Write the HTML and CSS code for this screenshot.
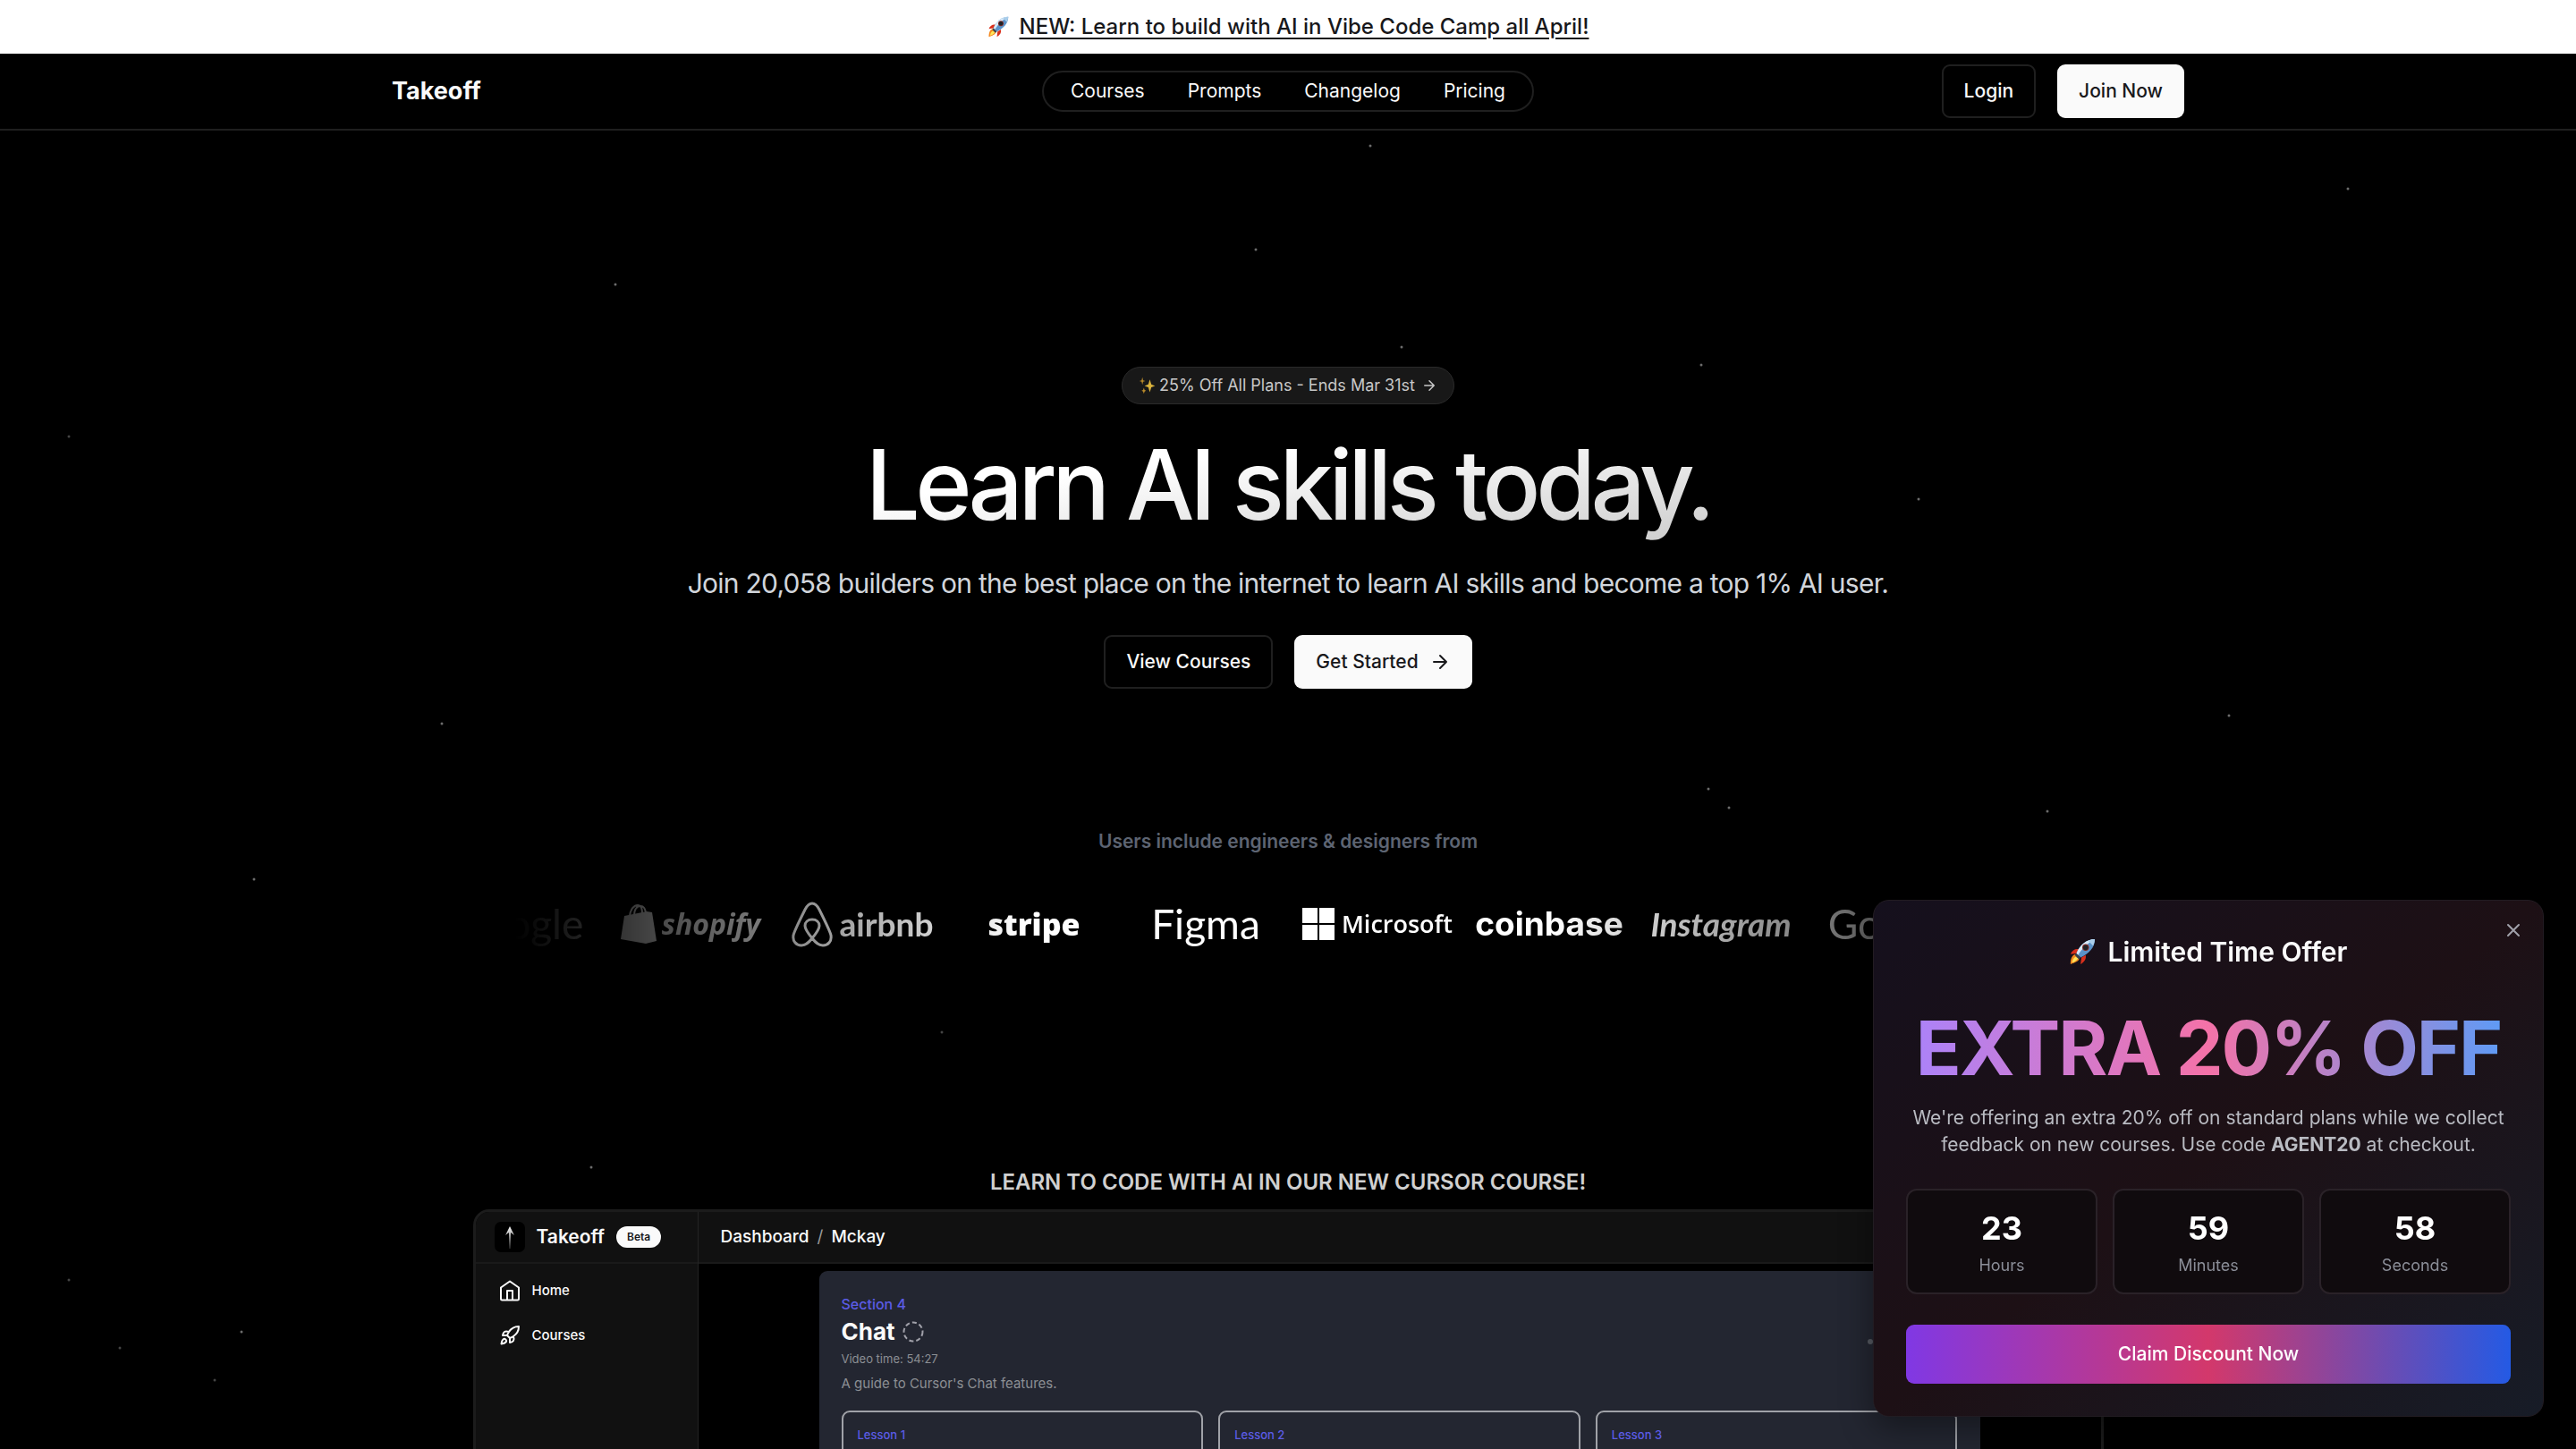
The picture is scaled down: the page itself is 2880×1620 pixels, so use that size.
FILE: index.html
```html
<!DOCTYPE html>
<html lang="en">
<head>
<meta charset="utf-8">
<title>Takeoff</title>
<link rel="stylesheet" href="styles.css">
</head>
<body>
<svg class="defs" aria-hidden="true">
  <defs>
    <symbol id="rocket-emoji" viewBox="0 0 32 32">
      <path d="M12 13c-4-1-8 1-10 6l7-1z" fill="#d9301c"/>
      <path d="M20 20c1 4-1 8-6 11l1-8z" fill="#d9301c"/>
      <path d="M8 19c-4 1-6 5-6 12 5-2 10-3 11-8z" fill="#f58a1f"/>
      <path d="M8 22c-2 1-4 4-4 7 3-1 5-2 7-5z" fill="#ffe75a"/>
      <path d="M31 1C21 1 13 8 9 18l5 5C24 18 31 11 31 1z" fill="#5b93c9"/>
      <path d="M31 1C21 1 13 8 9 18l2 2C16 12 22 6 31 1z" fill="#d7e8f7"/>
      <path d="M31 1c-3 0-5 1-8 2l6 6c1-3 2-5 2-8z" fill="#a9cdea"/>
      <path d="M9 18l5 5-2 2-5-5z" fill="#39434f"/>
      <circle cx="20" cy="11" r="4" fill="#8e2a22"/>
      <circle cx="20" cy="11" r="3" fill="#1d2228"/>
    </symbol>
    <symbol id="arrow" viewBox="0 0 24 24">
      <path d="M5 12h14M12 5l7 7-7 7" fill="none" stroke="currentColor" stroke-width="2" stroke-linecap="round" stroke-linejoin="round"/>
    </symbol>
  </defs>
</svg>

<div class="banner">
  <svg class="banner-emoji" aria-hidden="true"><use href="#rocket-emoji"/></svg>
  <a href="#">NEW: Learn to build with AI in Vibe Code Camp all April!</a>
</div>

<header class="header">
  <div class="header-inner">
    <a class="brand" href="#">Takeoff</a>
    <nav class="nav">
      <a href="#">Courses</a>
      <a href="#">Prompts</a>
      <a href="#">Changelog</a>
      <a href="#">Pricing</a>
    </nav>
    <div class="header-actions">
      <button class="btn btn-outline" type="button">Login</button>
      <button class="btn btn-solid" type="button">Join Now</button>
    </div>
  </div>
</header>

<main>
  <section class="hero">
    <a class="promo" href="#">
      <svg class="sparkles" viewBox="0 0 24 24" aria-hidden="true">
        <path d="M15 4l2 6.500 5 2-5 2-2 6.500-2-6.500-5-2 5-2z" fill="#d9b23c"/>
        <path d="M5 1l1 4 3 1-3 1-1 4-1-4-3-1 3-1z" fill="#b98a2a"/>
        <path d="M7 15l1 3 2 1-2 1-1 3-1-3-2-1 2-1z" fill="#b98a2a"/>
      </svg>
      <span>25% Off All Plans - Ends Mar 31st</span>
      <svg class="promo-arrow" aria-hidden="true"><use href="#arrow"/></svg>
    </a>
    <h1>Learn AI skills today.</h1>
    <p class="lead">Join 20,058 builders on the best place on the internet to learn AI skills and become a top 1% AI user.</p>
    <div class="hero-actions">
      <button class="btn btn-outline" type="button">View Courses</button>
      <button class="btn btn-solid" type="button">Get Started <svg class="btn-arrow" aria-hidden="true"><use href="#arrow"/></svg></button>
    </div>
  </section>

  <section class="companies">
    <h2>Users include engineers &amp; designers from</h2>
    <div class="marquee">
      <ul class="track">
        <li class="logo google">Google</li>
        <li class="logo shopify">
          <svg viewBox="0 0 40 46" width="40" height="46" aria-hidden="true">
            <path d="M4 14l25-5 6 1 5 32-12 3L0 40z" fill="currentColor"/>
            <path d="M10 14C11 6 15 2 19 2c4 0 5 4 5 9M15 13c0-6 3-10 7-10 4 0 5 3 6 7" stroke="currentColor" stroke-width="2" fill="none"/>
          </svg>
          <span>shopify</span>
        </li>
        <li class="logo airbnb">
          <svg viewBox="0 0 46 51" width="46" height="51" aria-hidden="true">
            <path d="M23 41c-5-6-8-10-8-14 0-4 3-7 8-7s8 3 8 7c0 4-3 8-8 14zm0 0c-4 5-7 8-12 8-6 0-10-5-9-11 0-3 4-11 13-29 2-4 4-7 8-7s6 3 8 7c9 18 13 26 13 29 1 6-3 11-9 11-5 0-8-3-12-8z" fill="none" stroke="currentColor" stroke-width="3" stroke-linejoin="round"/>
          </svg>
          <span>airbnb</span>
        </li>
        <li class="logo stripe">stripe</li>
        <li class="logo figma">Figma</li>
        <li class="logo microsoft">
          <svg viewBox="0 0 36 36" width="36" height="36" aria-hidden="true"><path d="M0 0h17v17H0zM19 0h17v17H19zM0 19h17v17H0zM19 19h17v17H19z" fill="currentColor"/></svg>
          <span>Microsoft</span>
        </li>
        <li class="logo coinbase">coinbase</li>
        <li class="logo instagram">Instagram</li>
        <li class="logo google">Google</li>
      </ul>
    </div>
  </section>

  <section class="preview">
    <h2>LEARN TO CODE WITH AI IN OUR NEW CURSOR COURSE!</h2>
    <div class="app">
      <aside class="side">
        <div class="side-head">
          <svg class="app-logo" viewBox="0 0 34 34" aria-hidden="true">
            <defs><linearGradient id="fade" x1="0" y1="0" x2="0" y2="1"><stop offset="0" stop-color="#fff"/><stop offset="1" stop-color="#fff" stop-opacity="0.200"/></linearGradient></defs>
            <rect width="34" height="34" rx="7" fill="#000"/>
            <path d="M17 5l5 10-4-3-.4 18h-1.200L16 12l-4 3z" fill="url(#fade)"/>
          </svg>
          <span class="app-name">Takeoff</span>
          <span class="beta">Beta</span>
        </div>
        <nav class="side-nav">
          <a href="#">
            <svg viewBox="0 0 24 24" aria-hidden="true"><path d="M2 8.500L12 1.500l10 7V21a1.500 1.500 0 0 1-1.500 1.500h-17A1.500 1.500 0 0 1 2 21zM9 22V12h6v10"/></svg>
            <span>Home</span>
          </a>
          <a href="#">
            <svg viewBox="0 0 24 24" aria-hidden="true"><path d="M4.500 16.500c-1.500 1.260-2 5-2 5s3.740-.5 5-2c.71-.84.7-2.130-.09-2.910a2.180 2.180 0 0 0-2.910-.09zM12 15l-3-3a22 22 0 0 1 2-3.950A12.880 12.880 0 0 1 22 2c0 2.720-.78 7.500-6 11a22.350 22.350 0 0 1-4 2zM9 12H4s.55-3.030 2-4c1.620-1.080 5 0 5 0M12 15v5s3.030-.55 4-2c1.080-1.620 0-5 0-5"/></svg>
            <span>Courses</span>
          </a>
        </nav>
      </aside>
      <div class="app-main">
        <div class="crumbs"><span>Dashboard</span><span class="slash">/</span><span>Mckay</span></div>
        <article class="course">
          <p class="section-no">Section 4</p>
          <h3>Chat <svg viewBox="0 0 24 24" aria-hidden="true"><circle cx="12" cy="12" r="10.500"/></svg></h3>
          <p class="video-time">Video time: 54:27</p>
          <p class="about">A guide to Cursor's Chat features.</p>
          <div class="lessons">
            <div class="lesson">Lesson 1</div>
            <div class="lesson">Lesson 2</div>
            <div class="lesson">Lesson 3</div>
          </div>
        </article>
      </div>
    </div>
  </section>
</main>

<svg class="stars" aria-hidden="true">
  <g fill="#6c6c6c">
    <circle cx="1532" cy="163" r="1.500"/><circle cx="2625" cy="211" r="1.500"/><circle cx="1404" cy="279" r="1.500"/><circle cx="688" cy="318" r="1.500"/>
    <circle cx="1567" cy="388" r="1.500"/><circle cx="1902" cy="408" r="1.500"/><circle cx="2145" cy="558" r="1.500"/><circle cx="494" cy="809" r="1.500"/>
    <circle cx="1910" cy="882" r="1.500"/><circle cx="1933" cy="903" r="1.500"/><circle cx="2289" cy="907" r="1.500"/><circle cx="284" cy="983" r="1.500"/>
    <circle cx="661" cy="1305" r="1.500"/><circle cx="270" cy="1489" r="1.500"/><circle cx="2492" cy="800" r="1.500"/>
  </g>
  <g fill="#444">
    <circle cx="77" cy="488" r="1.500"/><circle cx="1053" cy="1154" r="1.500"/><circle cx="77" cy="1431" r="1.500"/>
    <circle cx="134" cy="1507" r="1.500"/><circle cx="240" cy="1543" r="1.500"/>
  </g>
  <circle cx="2091" cy="1500" r="3" fill="#555961"/>
</svg>

<aside class="offer">
  <button class="offer-close" type="button" aria-label="Close">
    <svg viewBox="0 0 24 24" aria-hidden="true"><path d="M18 6L6 18M6 6l12 12" fill="none" stroke="currentColor" stroke-width="2" stroke-linecap="round"/></svg>
  </button>
  <h2><svg class="offer-emoji" aria-hidden="true"><use href="#rocket-emoji"/></svg>Limited Time Offer</h2>
  <p class="offer-big">EXTRA 20% OFF</p>
  <p class="offer-text">We're offering an extra 20% off on standard plans while we collect feedback on new courses. Use code <strong>AGENT20</strong> at checkout.</p>
  <div class="timer">
    <div class="unit"><b>23</b><span>Hours</span></div>
    <div class="unit"><b>59</b><span>Minutes</span></div>
    <div class="unit"><b>58</b><span>Seconds</span></div>
  </div>
  <button class="claim" type="button">Claim Discount Now</button>
</aside>
</body>
</html>
```
FILE: styles.css
```css
* { box-sizing: border-box; margin: 0; padding: 0; }
html, body { height: 100%; }
body {
  background: #000;
  color: #fafafa;
  font-family: Inter, "Liberation Sans", sans-serif;
  font-size: 21px;
  line-height: 30px;
  overflow: hidden;
}
a { color: inherit; text-decoration: none; }
ul { list-style: none; }
button { font: inherit; color: inherit; cursor: pointer; }
.defs { position: absolute; width: 0; height: 0; }

.banner {
  display: flex;
  align-items: center;
  justify-content: center;
  gap: 12px;
  height: 60px;
  background: #fff;
  color: #18181b;
  font-size: 24px;
  font-weight: 500;
}
.banner a { text-decoration: underline; text-underline-offset: 4px; }
.banner-emoji { width: 24px; height: 24px; }

.header { border-bottom: 2px solid #1f1f1f; }
.header-inner {
  display: grid;
  grid-template-columns: 1fr auto 1fr;
  align-items: center;
  max-width: 2100px;
  height: 84px;
  margin: 0 auto;
  padding: 0 48px;
}
.brand { font-size: 27px; font-weight: 700; line-height: 32px; }
.nav {
  display: flex;
  gap: 48px;
  padding: 6px 30px;
  border: 2px solid #1f1f1f;
  border-radius: 24px;
}
.header-actions { display: flex; justify-content: flex-end; gap: 24px; }
.btn {
  display: inline-flex;
  align-items: center;
  gap: 12px;
  height: 60px;
  padding: 0 24px;
  border: 0;
  border-radius: 9px;
  font-weight: 500;
}
.btn-outline { padding: 0 23px; border: 2px solid #1f1f1f; background: #000; }
.btn-solid { background: #fafafa; color: #18181b; }
.btn-arrow { width: 24px; height: 24px; }

.hero {
  display: flex;
  flex-direction: column;
  align-items: center;
  padding-top: 264px;
}
.promo {
  display: flex;
  align-items: center;
  gap: 3px;
  height: 42px;
  padding: 0 18px;
  border: 1px solid #2a2a2a;
  border-radius: 21px;
  background: #181818;
  color: #c8c8c8;
  font-size: 18px;
}
.sparkles { width: 20px; height: 20px; }
.promo-arrow { width: 18px; height: 18px; margin-left: 4px; }
h1 {
  margin-top: 36px;
  font-size: 108px;
  font-weight: 500;
  line-height: 108px;
  letter-spacing: -0.05em;
  padding-bottom: 12px;
  background: linear-gradient(to bottom right, #fff 30%, #ccc);
  -webkit-background-clip: text;
  background-clip: text;
  color: transparent;
}
.lead { margin-top: 24px; color: #d1d5db; font-size: 30px; line-height: 40px; letter-spacing: -0.025em; }
.hero-actions { display: flex; gap: 24px; margin-top: 38px; }

.companies { margin-top: 156px; text-align: center; }
.companies h2 { color: #5d6472; font-size: 21px; font-weight: 600; }
.marquee {
  max-width: 1728px;
  margin: 20px auto 0;
  overflow: hidden;
  -webkit-mask-image: linear-gradient(to right, transparent, #000 33%, #000 67%, transparent);
  mask-image: linear-gradient(to right, transparent, #000 33%, #000 67%, transparent);
}
.track { display: flex; margin-left: -92px; }
.logo {
  display: flex;
  flex: 0 0 192px;
  align-items: center;
  justify-content: center;
  gap: 8px;
  height: 114px;
  color: #fff;
  line-height: 60px;
}
.google { font-family: Lato, sans-serif; font-size: 46px; }
.shopify { gap: 6px; font-family: "Open Sans", sans-serif; font-size: 32px; font-style: italic; font-weight: 700; }
.airbnb { font-family: Lato, sans-serif; font-size: 37px; font-weight: 700; }
.stripe { font-family: "Open Sans", sans-serif; font-size: 34px; font-weight: 800; }
.figma { font-family: Lato, sans-serif; font-size: 46px; }
.microsoft { font-family: "Open Sans", sans-serif; font-size: 27px; font-weight: 600; }
.coinbase { font-size: 37px; font-weight: 700; }
.instagram { font-family: Lato, sans-serif; font-size: 37px; font-style: italic; font-weight: 700; }

.preview { margin-top: 214px; }
.preview h2 { color: #d0d0d0; font-size: 24px; font-weight: 600; line-height: 36px; text-align: center; }
.app {
  display: flex;
  max-width: 1823px;
  min-height: 900px;
  margin: 12px auto 0;
  border: 3px solid #1c1c1c;
  border-radius: 18px;
  overflow: hidden;
}
.side { flex: 0 0 249px; border-right: 1px solid #242424; background: #111; }
.side-head {
  display: flex;
  align-items: center;
  height: 58px;
  padding-left: 21px;
  border-bottom: 2px solid #1a1a1a;
}
.app-logo { width: 34px; height: 34px; }
.app-name { margin: 0 13px; font-weight: 600; }
.beta {
  padding: 0 12px;
  border-radius: 12px;
  background: #fafafa;
  color: #18181b;
  font-size: 12px;
  font-weight: 600;
  line-height: 24px;
}
.side-nav { display: flex; flex-direction: column; gap: 20px; padding: 15px 26px; }
.side-nav a { display: flex; align-items: center; gap: 13px; font-size: 15px; font-weight: 500; }
.side-nav svg { width: 24px; height: 24px; fill: none; stroke: currentColor; stroke-width: 2; stroke-linejoin: round; stroke-linecap: round; }
.app-main { flex: 1; }
.crumbs {
  display: flex;
  align-items: center;
  gap: 9px;
  height: 58px;
  padding-left: 25px;
  border-bottom: 2px solid #1a1a1a;
  background: #111;
  font-size: 19px;
  font-weight: 500;
}
.slash { color: #9a9a9a; font-weight: 400; }
.course {
  margin: 8px 135px 0;
  min-height: 600px;
  padding: 24px 25px;
  border-radius: 9px;
  background: #232631;
}
.section-no { color: #5b5ce6; font-size: 16px; font-weight: 500; line-height: 26px; }
.course h3 { display: flex; align-items: center; gap: 8px; font-size: 26px; line-height: 36px; }
.course h3 svg { width: 24px; height: 24px; fill: none; stroke: #a1a1aa; stroke-width: 2; stroke-dasharray: 5 3; }
.video-time { color: #8c8f94; font-size: 13px; line-height: 24px; }
.about { color: #8c8f94; font-size: 15px; line-height: 32px; }
.lessons { display: grid; grid-template-columns: repeat(3, 1fr); gap: 17px; margin-top: 14px; }
.lesson {
  min-height: 300px;
  padding: 10px 16px;
  border: 2px solid #a0a2a8;
  border-radius: 9px;
  color: #5b5ce6;
  font-size: 13px;
  font-weight: 500;
}

.stars { position: absolute; top: 0; left: 0; width: 100%; height: 100%; pointer-events: none; }

.offer {
  position: fixed;
  right: 36px;
  bottom: 36px;
  width: 750px;
  padding: 36px;
  border: 1px solid #221c22;
  border-radius: 18px;
  background: linear-gradient(to bottom right, #15101d, #1d1015 50%, #171c27);
  box-shadow: 0 12px 36px rgba(0, 0, 0, 0.4);
  text-align: center;
}
.offer-close { position: absolute; top: 21px; right: 21px; width: 24px; height: 24px; border: 0; background: none; color: #a1a1aa; }
.offer-close svg { display: block; width: 24px; height: 24px; }
.offer h2 { display: flex; align-items: center; justify-content: center; gap: 13px; font-size: 30px; font-weight: 600; line-height: 42px; }
.offer-emoji { width: 30px; height: 30px; }
.offer-big {
  margin-top: 42px;
  font-size: 84px;
  font-weight: 700;
  line-height: 90px;
  letter-spacing: -0.025em;
  white-space: nowrap;
  background: linear-gradient(to right, #a983fb, #f472a8 50%, #5a9cf8);
  -webkit-background-clip: text;
  background-clip: text;
  color: transparent;
}
.offer-text { margin-top: 18px; color: #b9bbc2; }
.timer { display: grid; grid-template-columns: repeat(3, 1fr); gap: 17px; margin-top: 34px; }
.unit {
  display: flex;
  flex-direction: column;
  gap: 6px;
  padding: 18px;
  border: 2px solid #2a2228;
  border-radius: 12px;
  background: #100b0e;
}
.unit b { color: #fff; font-size: 36px; line-height: 48px; }
.unit span { color: #8b8e98; font-size: 18px; line-height: 24px; }
.claim {
  width: 100%;
  height: 66px;
  margin-top: 34px;
  border: 0;
  border-radius: 9px;
  background: linear-gradient(to right, #8038e4, #d3386b 50%, #245ae4);
  color: #fff;
  font-weight: 500;
}
```
